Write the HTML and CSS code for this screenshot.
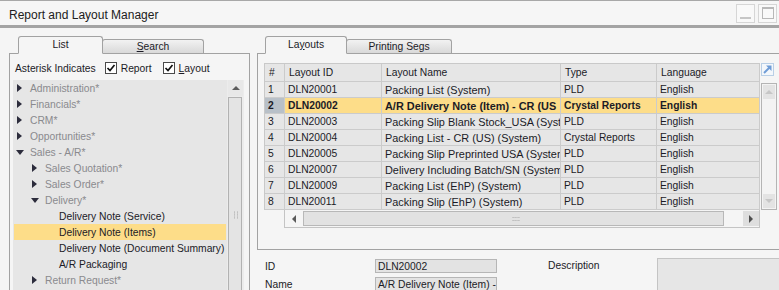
FILE: index.html
```html
<!DOCTYPE html>
<html>
<head>
<meta charset="utf-8">
<title>Report and Layout Manager</title>
<link rel="stylesheet" href="styles.css">
</head>
<body>
<div class="window">
  <div class="titlebar">
    <span class="title">Report and Layout Manager</span>
    <div class="winbtns">
      <span class="wbtn"><span class="dash"></span></span>
      <span class="wbtn"><span class="sq"></span></span>
    </div>
  </div>
  <div class="main">
    <div class="left">
      <div class="tabs">
        <div class="tab active tab-list">List</div>
        <div class="tab tab-search"><u>S</u>earch</div>
      </div>
      <div class="pane">
        <div class="asterisk">
          <span>Asterisk Indicates</span>
          <span class="chk first"><svg width="12" height="12" viewBox="0 0 12 12"><rect x="0.5" y="0.5" width="11" height="11" fill="#fff" stroke="#4a4a4a"/><path d="M2.5 6 L5 8.5 L9.5 3" fill="none" stroke="#111" stroke-width="1.7"/></svg></span>
          <span class="chklabel">Report</span>
          <span class="chk second"><svg width="12" height="12" viewBox="0 0 12 12"><rect x="0.5" y="0.5" width="11" height="11" fill="#fff" stroke="#4a4a4a"/><path d="M2.5 6 L5 8.5 L9.5 3" fill="none" stroke="#111" stroke-width="1.7"/></svg></span>
          <span class="chklabel"><u>L</u>ayout</span>
        </div>
        <div class="tree">
          <div class="treelist">
            <div class="row l0 node"><span class="ico"><span class="tri-r"></span></span>Administration*</div>
            <div class="row l0 node"><span class="ico"><span class="tri-r"></span></span>Financials*</div>
            <div class="row l0 node"><span class="ico"><span class="tri-r"></span></span>CRM*</div>
            <div class="row l0 node"><span class="ico"><span class="tri-r"></span></span>Opportunities*</div>
            <div class="row l0 node"><span class="ico"><span class="tri-d"></span></span>Sales - A/R*</div>
            <div class="row l1 node"><span class="ico"><span class="tri-r"></span></span>Sales Quotation*</div>
            <div class="row l1 node"><span class="ico"><span class="tri-r"></span></span>Sales Order*</div>
            <div class="row l1 node"><span class="ico"><span class="tri-d"></span></span>Delivery*</div>
            <div class="row leaf">Delivery Note (Service)</div>
            <div class="row leaf selected">Delivery Note (Items)</div>
            <div class="row leaf">Delivery Note (Document Summary)</div>
            <div class="row leaf">A/R Packaging</div>
            <div class="row l1 node"><span class="ico"><span class="tri-r"></span></span>Return Request*</div>
          </div>
          <div class="treescroll">
            <div class="tsbtn"><span class="up-dark"></span></div>
            <div class="tstrack"><span class="grip"></span></div>
          </div>
        </div>
      </div>
    </div>

    <div class="right">
      <div class="tabs rtabs">
        <div class="tab active tab-layouts">La<u>y</u>outs</div>
        <div class="tab tab-segs">Printing Segs</div>
      </div>
      <div class="rpane">
        <div class="gridwrap">
          <div class="gridcol">
            <div class="grid">
              <div class="c h">#</div><div class="c h">Layout ID</div><div class="c h">Layout Name</div><div class="c h">Type</div><div class="c h">Language</div>

              <div class="c">1</div><div class="c">DLN20001</div><div class="c nm">Packing List (System)</div><div class="c">PLD</div><div class="c">English</div>

              <div class="c num sel">2</div><div class="c sel">DLN20002</div><div class="c nm sel">A/R Delivery Note (Item) - CR (US</div><div class="c sel">Crystal Reports</div><div class="c sel">English</div>

              <div class="c">3</div><div class="c">DLN20003</div><div class="c nm">Packing Slip Blank Stock_USA (System</div><div class="c">PLD</div><div class="c">English</div>

              <div class="c">4</div><div class="c">DLN20004</div><div class="c nm">Packing List - CR (US) (System)</div><div class="c">Crystal Reports</div><div class="c">English</div>

              <div class="c">5</div><div class="c">DLN20005</div><div class="c nm">Packing Slip Preprinted USA (System)</div><div class="c">PLD</div><div class="c">English</div>

              <div class="c">6</div><div class="c">DLN20007</div><div class="c nm">Delivery Including Batch/SN (System)</div><div class="c">PLD</div><div class="c">English</div>

              <div class="c">7</div><div class="c">DLN20009</div><div class="c nm">Packing List (EhP) (System)</div><div class="c">PLD</div><div class="c">English</div>

              <div class="c">8</div><div class="c">DLN20011</div><div class="c nm">Packing Slip (EhP) (System)</div><div class="c">PLD</div><div class="c">English</div>
            </div>
            <div class="hscroll">
              <div class="hbtn"><span class="left-dark"></span></div>
              <div class="htrack"><span class="hgrip"></span></div>
              <div class="hbtn right-btn"><span class="right-dark"></span></div>
            </div>
          </div>
          <div class="sidecol">
            <div class="expand">
              <svg width="13" height="13" viewBox="0 0 13 13"><rect x="0.5" y="0.5" width="12" height="12" fill="#f3f7fb" stroke="#b9cfe6"/><path d="M3 10 L9 4" stroke="#6f9cd6" stroke-width="2"/><path d="M5 2.5 L10.5 2.5 L10.5 8 Z" fill="#6f9cd6"/></svg>
            </div>
            <div class="vscroll">
              <div class="vbtn"><span class="up-light"></span></div>
              <div class="vbtn"><span class="down-light"></span></div>
            </div>
          </div>
        </div>
      </div>
      <div class="details">
        <div class="form">
          <span class="lbl">ID</span><span class="field">DLN20002</span>
          <span class="lbl">Name</span><span class="field">A/R Delivery Note (Item) -</span>
        </div>
        <span class="desc-lbl">Description</span>
        <div class="desc-box"></div>
      </div>
    </div>
  </div>
</div>
</body>
</html>
```
FILE: styles.css
```css
* { box-sizing: border-box; }
html, body { margin: 0; padding: 0; }
body {
  width: 779px;
  height: 290px;
  overflow: hidden;
  background: #f5f5f5;
  font-family: "Liberation Sans", Arial, sans-serif;
  font-size: 10.3px;
  color: #1b1b26;
}
u { text-decoration: underline; }

.window {
  width: 779px;
  height: 290px;
  overflow: hidden;
  display: flex;
  flex-direction: column;
  border-top: 1px solid #a8a8a8;
}

.titlebar {
  height: 27px;
  flex: none;
  display: flex;
  align-items: flex-start;
  border-bottom: 3px solid #a4a4a4;
  background: #f6f6f6;
}
.title {
  margin: 7px 0 0 9px;
  font-size: 12px;
  line-height: 14px;
  color: #202020;
}
.winbtns {
  margin: 3px 2px 0 auto;
  display: flex;
  gap: 3px;
}
.wbtn {
  width: 19px;
  height: 19px;
  border: 1px solid #d6d6d6;
  background: #f9f9f9;
  display: flex;
  align-items: flex-end;
  justify-content: center;
}
.dash {
  width: 11px;
  height: 2px;
  background: #c6c6c6;
  margin-bottom: 3px;
}
.sq {
  width: 12px;
  height: 12px;
  border: 1px solid #b8b8b8;
  border-top-width: 2px;
  margin-bottom: 3px;
}

.main {
  flex: 1;
  min-height: 0;
  display: flex;
  overflow: hidden;
}

/* tabs */
.tabs {
  display: flex;
  align-items: flex-end;
  margin-top: 8px;
  margin-bottom: -1px;
  position: relative;
  z-index: 1;
  height: 18px;
  flex: none;
}
.tab {
  border: 1px solid #a2a2a2;
  border-radius: 3px 3px 0 0;
  display: flex;
  align-items: center;
  justify-content: center;
  color: #1b1b26;
}
.tab.active {
  height: 18px;
  background: #f5f5f5;
  border-bottom-color: #f5f5f5;
  padding-bottom: 1px;
}
.tab:not(.active) {
  height: 14px;
  margin-bottom: 1px;
  border-bottom: none;
  background: linear-gradient(#f2f2f2, #d9d9d9);
  margin-left: -1px;
}
.tab-list { width: 85px; margin-left: 9px; }
.tab-search { width: 102px; }
.tab-layouts { width: 82px; margin-left: 8px; }
.tab-segs { width: 106px; }

/* left */
.left {
  margin-left: 9px;
  width: 241px;
  flex: none;
  display: flex;
  flex-direction: column;
}
.pane {
  flex: 1;
  border: 1px solid #a2a2a2;
  border-bottom: none;
  display: flex;
  flex-direction: column;
  min-height: 0;
}
.asterisk {
  height: 26px;
  flex: none;
  display: flex;
  align-items: center;
  padding: 2px 0 0 5px;
  white-space: nowrap;
}
.chk { display: flex; }
.chk svg { display: block; }
.chk.first { margin-left: 9px; }
.chk.second { margin-left: 11px; }
.chklabel { margin-left: 4px; }

.tree {
  flex: 1;
  min-height: 0;
  display: flex;
  margin-left: 3px;
  width: 231px;
}
.treelist {
  width: 214px;
  background: #e6e6e6;
  overflow: hidden;
}
.row {
  height: 16px;
  display: flex;
  align-items: center;
  white-space: nowrap;
}
.node { color: #8a8a8e; }
.leaf { color: #1b1b26; padding-left: 46px; }
.l0 { padding-left: 0; }
.l1 { padding-left: 15px; }
.leaf.selected { background: #fddd89; margin-left: 1px; padding-left: 45px; margin-right: 1px; }
.ico {
  width: 13px;
  height: 16px;
  margin-right: 4px;
  display: flex;
  align-items: center;
  justify-content: center;
  flex: none;
}
.tri-r {
  width: 0; height: 0;
  border-left: 5px solid #2c2c3c;
  border-top: 4.5px solid transparent;
  border-bottom: 4.5px solid transparent;
}
.tri-d {
  width: 0; height: 0;
  border-top: 5px solid #2c2c3c;
  border-left: 4.5px solid transparent;
  border-right: 4.5px solid transparent;
}
.treescroll {
  width: 17px;
  background: #ececec;
  display: flex;
  flex-direction: column;
  padding: 0 1px 0 1px;
}
.tsbtn {
  height: 16px;
  flex: none;
  display: flex;
  align-items: center;
  justify-content: center;
  background: #e8e8e8;
}
.up-dark {
  width: 0; height: 0;
  border-bottom: 4px solid #5c5c5c;
  border-left: 4px solid transparent;
  border-right: 4px solid transparent;
}
.tstrack {
  flex: 1;
  margin-top: 1px;
  width: 14px;
  border: 1px solid #b2b2b2;
  border-bottom: none;
  background: #e4e4e4;
  display: flex;
  justify-content: center;
  padding-top: 113px;
}
.grip {
  width: 5px;
  height: 8px;
  background-image: radial-gradient(circle, #bdbdbd 0.8px, transparent 0.9px);
  background-size: 3px 2.5px;
}

/* right */
.right {
  margin-left: 7px;
  width: 530px;
  flex: none;
  display: flex;
  flex-direction: column;
}
.rpane {
  height: 197px;
  flex: none;
  border: 1px solid #a2a2a2;
  border-right: none;
  padding: 9px 0 0 6px;
}
.gridwrap {
  display: flex;
}
.gridcol {
  width: 496px;
}
.grid {
  display: grid;
  grid-template-columns: 20px 97px 179px 96px 103px;
  grid-template-rows: 18px repeat(8, 16px);
  border-left: 1px solid #c9c9c9;
  border-top: 1px solid #c9c9c9;
}
.c {
  background: #e6e6e6;
  border-right: 1px solid #cbcbcb;
  border-bottom: 1px solid #cbcbcb;
  padding-left: 3px;
  white-space: nowrap;
  overflow: hidden;
  display: flex;
  align-items: center;
  color: #1b1b26;
}
.c.nm { font-size: 10.9px; }
.c.h { padding-left: 4px; }
.c.sel { background: #fddd89; font-weight: bold; }
.c.num.sel { background: #b8c0c8; }
.hscroll {
  margin-left: 20px;
  width: 476px;
  height: 18px;
  border: 1px solid #c4c4c4;
  border-top: none;
  display: flex;
  align-items: center;
  padding: 0 0 0 1px;
}
.hbtn {
  width: 15px;
  height: 15px;
  display: flex;
  align-items: center;
  justify-content: center;
}
.right-btn {
  margin-left: auto;
  width: 16px;
  background: #dedede;
}
.left-dark {
  width: 0; height: 0;
  border-right: 4px solid #5a5a5a;
  border-top: 4px solid transparent;
  border-bottom: 4px solid transparent;
}
.right-dark {
  width: 0; height: 0;
  border-left: 4px solid #4e4e4e;
  border-top: 4px solid transparent;
  border-bottom: 4px solid transparent;
}
.htrack {
  margin-left: 2px;
  width: 421px;
  height: 15px;
  border: 1px solid #b8b8b8;
  background: #e2e2e2;
  display: flex;
  align-items: center;
  justify-content: center;
  padding-left: 4px;
}
.hgrip {
  width: 8px;
  height: 5px;
  background-image: radial-gradient(circle, #bdbdbd 0.8px, transparent 0.9px);
  background-size: 2.5px 3px;
}
.sidecol {
  width: 17px;
  display: flex;
  flex-direction: column;
}
.expand {
  height: 20px;
  padding-left: 1px;
}
.expand svg { display: block; }
.vscroll {
  margin-left: 1px;
  width: 16px;
  height: 127px;
  border: 1px solid #b4b4b4;
  background: #f3f3f3;
  display: flex;
  flex-direction: column;
  justify-content: space-between;
  padding: 1px;
}
.vbtn {
  height: 14px;
  background: #e3e3e3;
  display: flex;
  align-items: center;
  justify-content: center;
}
.up-light {
  width: 0; height: 0;
  border-bottom: 4px solid #c6c6c6;
  border-left: 4.5px solid transparent;
  border-right: 4.5px solid transparent;
}
.down-light {
  width: 0; height: 0;
  border-top: 4px solid #c6c6c6;
  border-left: 4.5px solid transparent;
  border-right: 4.5px solid transparent;
}

.details {
  display: flex;
  align-items: flex-start;
  padding: 9px 0 0 8px;
}
.form {
  display: grid;
  grid-template-columns: 110px 122px;
  grid-auto-rows: 14px;
  row-gap: 4px;
}
.lbl {
  display: flex;
  align-items: center;
}
.field {
  background: #e3e3e3;
  border: 1px solid #b6b6b6;
  padding-left: 2px;
  white-space: nowrap;
  overflow: hidden;
  display: flex;
  align-items: center;
}
.desc-lbl {
  margin-left: 51px;
  line-height: 14px;
}
.desc-box {
  margin-left: 57px;
  margin-top: -1px;
  width: 140px;
  height: 40px;
  background: #e6e6e6;
  border: 1px solid #c4c4c4;
}
```
